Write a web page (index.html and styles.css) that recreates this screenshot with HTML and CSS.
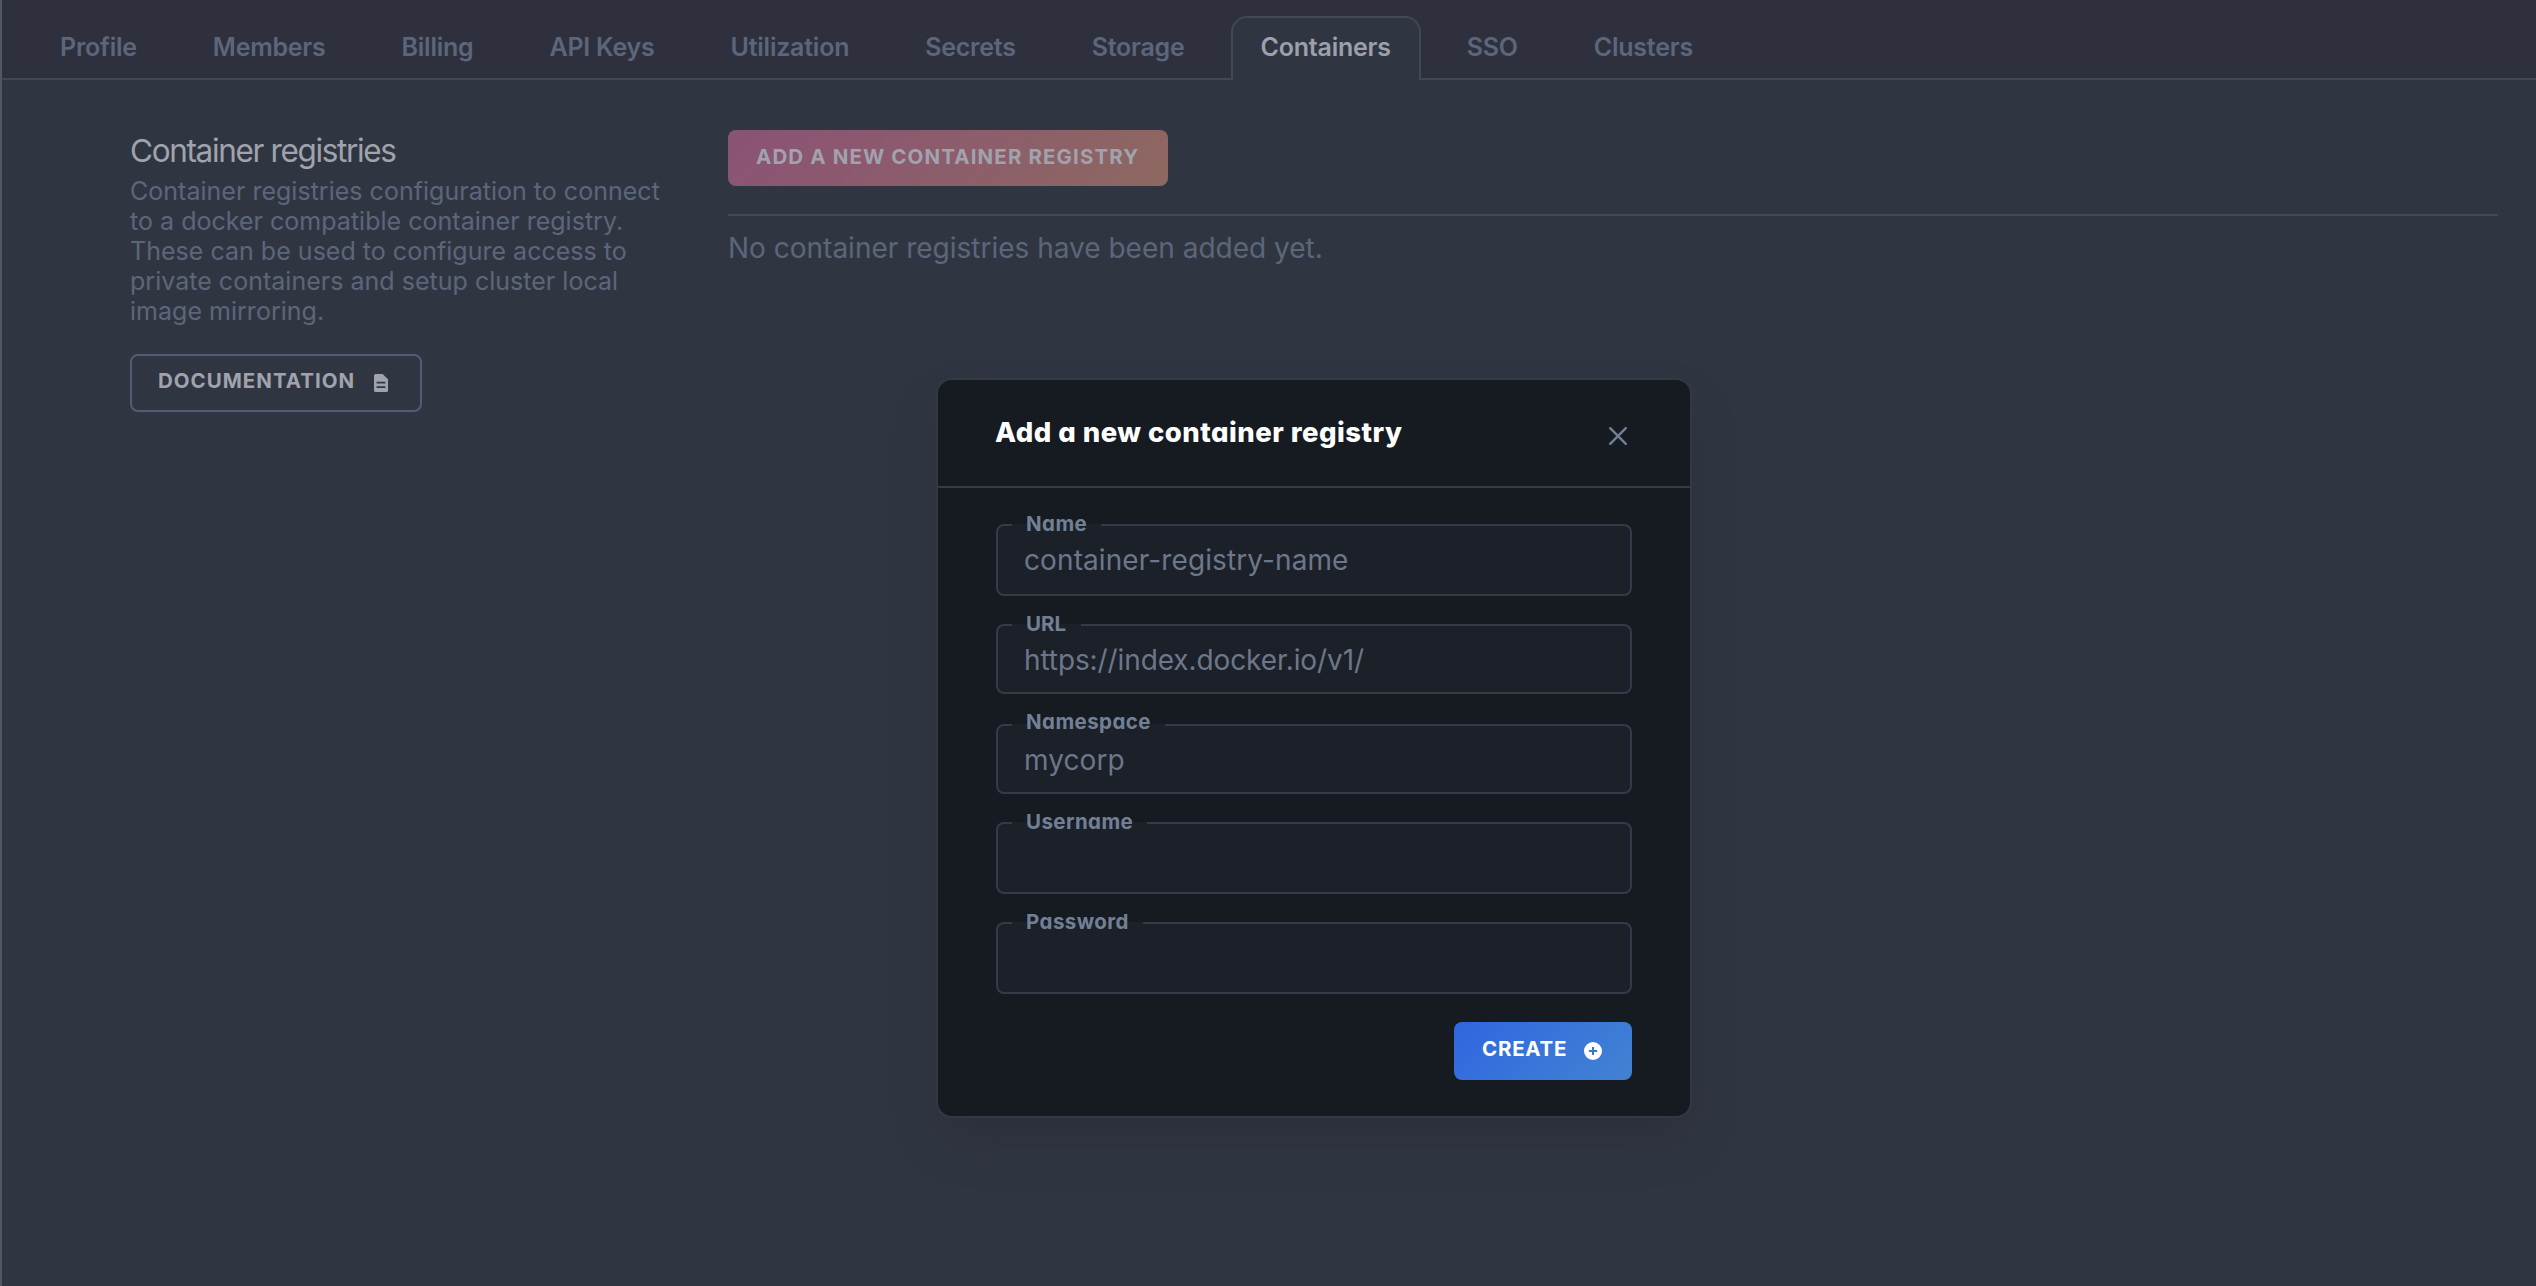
FILE: index.html
```html
<!DOCTYPE html>
<html lang="en">
<head>
<meta charset="utf-8">
<title>Container registries</title>
<link rel="stylesheet" href="styles.css">
</head>
<body>
<div class="page">
  <nav class="tabs">
    <a class="tab">Profile</a>
    <a class="tab">Members</a>
    <a class="tab">Billing</a>
    <a class="tab">API Keys</a>
    <a class="tab">Utilization</a>
    <a class="tab">Secrets</a>
    <a class="tab">Storage</a>
    <a class="tab tab-active">Containers</a>
    <a class="tab">SSO</a>
    <a class="tab">Clusters</a>
  </nav>
  <main class="content">
    <section class="intro">
      <h1 class="heading">Container registries</h1>
      <p class="description">Container registries configuration to connect to a docker compatible container registry. These can be used to configure access to private containers and setup cluster local image mirroring.</p>
      <a class="button button-outline">
        <span class="button-label">Documentation</span>
        <svg class="doc-icon" viewBox="0 0 14 18"><path fill="currentColor" fill-rule="evenodd" d="M1.6 0H8.6L14 5.2V16.4Q14 18 12.4 18H1.6Q0 18 0 16.4V1.6Q0 0 1.6 0ZM2.6 7.7V9.5H11.4V7.7ZM2.6 12.3V14.1H11.4V12.3Z"/></svg>
      </a>
    </section>
    <section class="registries">
      <a class="button button-pink"><span class="button-label">Add a new container registry</span></a>
      <p class="empty">No container registries have been added yet.</p>
    </section>
  </main>
</div>

<div class="modal" role="dialog">
  <header class="modal-header">
    <h2 class="modal-title">Add a new container registry</h2>
    <svg class="close-icon" viewBox="0 0 18 18"><path d="M1.2 1.2L16.8 16.8M16.8 1.2L1.2 16.8" fill="none" stroke="currentColor" stroke-width="2.4" stroke-linecap="round"/></svg>
  </header>
  <form class="modal-body">
    <div class="field"><label class="field-label">Name</label><span class="placeholder">container-registry-name</span></div>
    <div class="field field-short"><label class="field-label field-label-tight">URL</label><span class="placeholder placeholder-url">https://index.docker.io/v1/</span></div>
    <div class="field field-short field-after"><label class="field-label"><span class="field-label-raised">Namespace</span></label><span class="placeholder">mycorp</span></div>
    <div class="field"><label class="field-label">Username</label></div>
    <div class="field"><label class="field-label">Password</label></div>
    <div class="button button-blue">
      <span class="button-label">Create</span>
      <svg class="plus-icon" viewBox="0 0 18 18"><circle cx="9" cy="9" r="9" fill="#fff"/><path d="M9 4.9V13.1M4.9 9H13.1" fill="none" stroke="#3975d6" stroke-width="2"/></svg>
    </div>
  </form>
</div>
</body>
</html>
```
FILE: styles.css
```css
* { box-sizing: border-box; }

body {
  margin: 0;
  height: 1286px;
  overflow: hidden;
  background: #303641;
  font-family: Inter, "Liberation Sans", sans-serif;
}

h1, h2, p { margin: 0; font-weight: 400; }

.page {
  height: 1286px;
  border-left: 2px solid #515763;
}

/* Tab bar */
.tabs {
  display: flex;
  align-items: flex-end;
  gap: 16px;
  height: 80px;
  padding-left: 28px;
  background: linear-gradient(#404758, #404758) left bottom / 100% 2px no-repeat #2e313d;
}

.tab {
  height: 64px;
  padding: 14px 28px 0;
  border: 2px solid transparent;
  border-bottom: 0;
  color: #5c667b;
  font-size: 25px;
  font-weight: 600;
  line-height: 31px;
  letter-spacing: -0.235px;
}

.tab-active {
  border-color: #404758;
  border-radius: 16px 16px 0 0;
  background: #303641;
  color: #9da0ac;
}

/* Page content */
.content {
  display: flex;
  gap: 58px;
  padding: 50px 38px 0 128px;
}

.intro { width: 540px; flex: none; }

.heading {
  color: #a0a3ad;
  font-size: 31.5px;
  line-height: 42px;
  letter-spacing: -1.35px;
}

.description {
  margin: 4px 0 28px;
  color: #5c667b;
  font-size: 25px;
  line-height: 30px;
  letter-spacing: 0.02px;
}

.registries { flex: 1; }

.empty {
  margin-top: 28px;
  padding-top: 12px;
  border-top: 2px solid #404758;
  color: #5c667b;
  font-size: 28px;
  line-height: 40px;
}

/* Buttons */
.button {
  display: flex;
  width: fit-content;
  height: 58px;
  padding: 0 28px;
  border-radius: 8px;
  font-size: 20.5px;
  font-weight: 700;
  line-height: 53px;
  letter-spacing: 1px;
  text-transform: uppercase;
}

.button-outline {
  width: 292px;
  padding: 0 26px;
  border: 2px solid #535c74;
  color: #a0a3ad;
}

.button-outline .button-label { width: 216px; line-height: 50px; }

.doc-icon { width: 14px; height: 18px; margin-top: 18px; }

.button-pink {
  width: 440px;
  height: 56px;
  background: linear-gradient(135deg, #8a5275, #8e6861);
  color: #a0a3ad;
  letter-spacing: 1.12px;
}

.button-blue {
  width: 178px;
  margin: 28px 0 0 auto;
  background: linear-gradient(135deg, #3066e0, #4183d2);
  color: #fff;
  letter-spacing: 0.75px;
}

.button-blue .button-label { width: 102px; }

.plus-icon { width: 18px; height: 18px; margin-top: 20px; }

/* Dialog */
.modal {
  position: absolute;
  left: 936px;
  top: 378px;
  width: 756px;
  height: 740px;
  border: 2px solid #343845;
  border-radius: 16px;
  background: #161a21;
  box-shadow: 0 26px 50px -10px rgba(36, 36, 48, 0.4);
}

.modal-header {
  display: flex;
  align-items: center;
  justify-content: space-between;
  height: 108px;
  padding: 0 63px 0 57px;
  border-bottom: 2px solid #343a48;
}

.modal-title {
  margin-bottom: 2px;
  color: #fff;
  font-size: 27.5px;
  font-weight: 800;
  line-height: 34px;
  letter-spacing: 0.47px;
  font-feature-settings: "cv11";
}

.close-icon { width: 18px; height: 18px; margin-top: 5px; color: #728096; }

.modal-body { padding: 36px 58px; }

.field {
  position: relative;
  height: 72px;
  padding: 14px 26px;
  border: 2px solid #343a48;
  border-radius: 8px;
  background: #1c2028;
}

.field + .field { margin-top: 28px; }
.field-short { height: 70px; }
.field + .field-after { margin-top: 30px; }

.field-label {
  position: absolute;
  left: 14px;
  top: -2px;
  height: 2px;
  padding: 0 14px;
  background: #1c2028;
  color: #728096;
  font-size: 20.5px;
  font-weight: 700;
  line-height: 0;
  letter-spacing: 0.42px;
  font-feature-settings: "cv11";
}

.field-label-tight { padding-right: 15px; letter-spacing: 0; }
.field-label-raised { display: block; margin-top: -2px; }

.placeholder {
  display: block;
  color: #6c778b;
  font-size: 28px;
  line-height: 40px;
  letter-spacing: 0.1px;
}

.placeholder-url { letter-spacing: -0.1px; }
```
